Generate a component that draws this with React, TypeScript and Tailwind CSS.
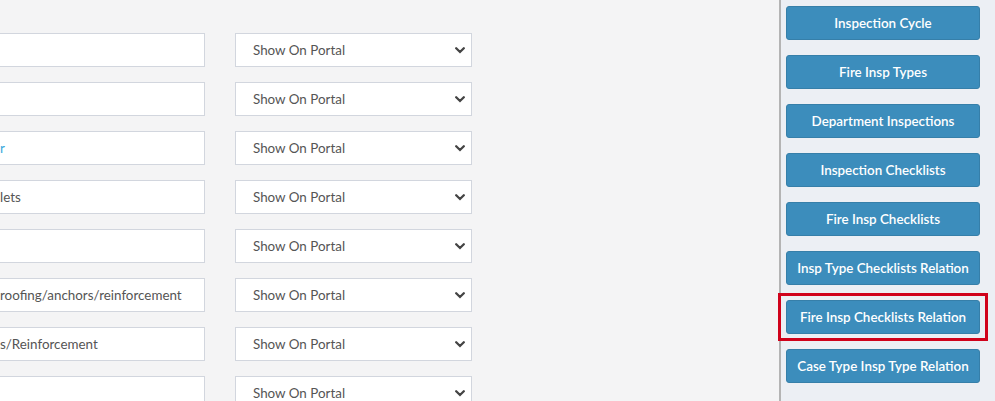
import React from 'react';

const rows: { text: string; blue?: boolean }[] = [
  { text: '' },
  { text: '' },
  { text: 'r', blue: true },
  { text: 'lets' },
  { text: '' },
  { text: 'roofing/anchors/reinforcement' },
  { text: 's/Reinforcement' },
  { text: '' },
];

const links = [
  'Inspection Cycle',
  'Fire Insp Types',
  'Department Inspections',
  'Inspection Checklists',
  'Fire Insp Checklists',
  'Insp Type Checklists Relation',
  'Fire Insp Checklists Relation',
  'Case Type Insp Type Relation',
];

function Chevron() {
  return (
    <svg width="10" height="7" viewBox="0 0 10 7" className="text-[#444]">
      <path d="M1.2 1.3 L5 5 L8.8 1.3" fill="none" stroke="currentColor" strokeWidth="2.3" strokeLinecap="round" />
    </svg>
  );
}

function FieldRow({ text, blue }: { text: string; blue?: boolean }) {
  return (
    <div className="flex gap-[30px]">
      <div className="w-[205px] h-[34px] bg-white border border-l-0 border-[#d2d6de] flex items-center text-[13.4px] text-[#555]">
        <span className={blue ? 'text-[#3aa8dc]' : ''}>{text}</span>
      </div>
      <div className="w-[237px] h-[34px] bg-white border border-[#d2d6de] flex items-center justify-between pl-[17px] pr-[6px] text-[13.4px] text-[#555]">
        <span>Show On Portal</span>
        <Chevron />
      </div>
    </div>
  );
}

export default function App() {
  return (
    <div className="flex w-[995px] h-[401px] overflow-hidden" style={{ fontFamily: 'Lato, "Open Sans", sans-serif' }}>
      {/* Form area */}
      <div className="flex-1 bg-[#f4f4f5] pt-[33px] flex flex-col gap-[15px]">
        {rows.map((r, i) => (
          <FieldRow key={i} text={r.text} blue={r.blue} />
        ))}
      </div>

      {/* Sidebar */}
      <div className="relative w-[216px] bg-[#eceff4] border-l-2 border-[#b4b4b4] pt-[6px] pl-[5px] pr-[15px] flex flex-col gap-[15px]">
        {links.map((l) => (
          <button
            key={l}
            className="w-[194px] h-[34px] rounded-[3px] bg-[#3c8dbc] border border-[#367fa9] text-white text-[13.4px] font-semibold"
          >
            {l}
          </button>
        ))}
        <div className="absolute left-[-3px] top-[293px] w-[210px] h-[48px] border-[3px] border-[#d0021b]" />
      </div>
    </div>
  );
}
